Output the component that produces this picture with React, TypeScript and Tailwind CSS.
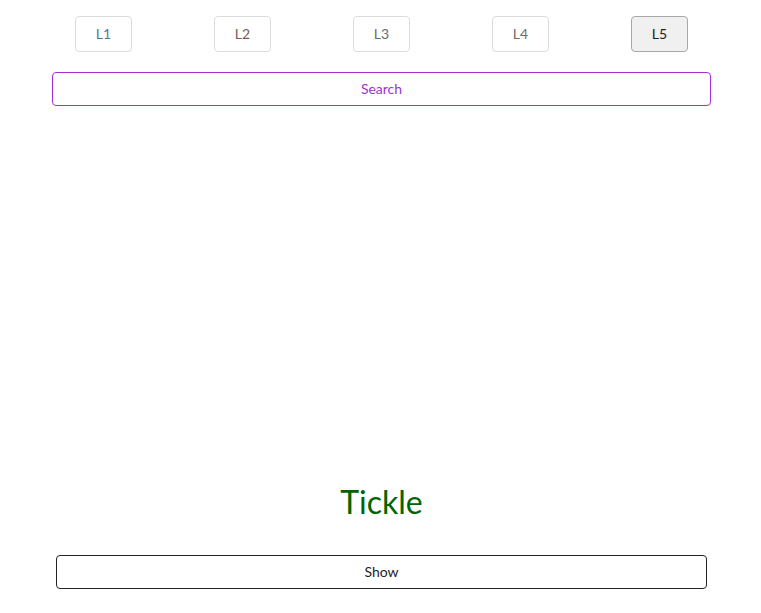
import React from "react";

const levels = ["L1", "L2", "L3", "L4", "L5"];
const levelText: Record<string, string> = {
  L1: "text-[#4b7a9e]",
  L2: "text-[#7a5a5a]",
  L3: "text-[#6b6b6b]",
  L4: "text-[#6f6a66]",
  L5: "text-[#222222]",
};

export default function App() {
  const active = "L5";
  return (
    <div className="w-[761px] h-[613px] pl-[2px] bg-white flex flex-col items-center font-['Lato','Liberation_Sans',sans-serif]">
      <div className="w-[695px] mt-4 flex justify-around">
        {levels.map((l) => (
          <button
            key={l}
            className={
              "w-[57px] h-[36px] rounded border text-sm " +
              levelText[l] +
              (l === active
                ? " bg-[#f0f0f0] border-[#a8a8a8]"
                : " bg-white border-[#dcdcdc]")
            }
          >
            {l}
          </button>
        ))}
      </div>
      <button className="mt-[20px] w-[659px] h-[34px] rounded border border-[#a42fd6] text-sm text-[#9a35c8] bg-white">
        Search
      </button>
      <div className="flex-1" />
      <div className="text-[32px] leading-none text-[#006400] mb-[37px]">Tickle</div>
      <button className="w-[651px] h-[34px] rounded border border-[#222] text-sm text-[#222] bg-white mb-[24px]">
        Show
      </button>
    </div>
  );
}
